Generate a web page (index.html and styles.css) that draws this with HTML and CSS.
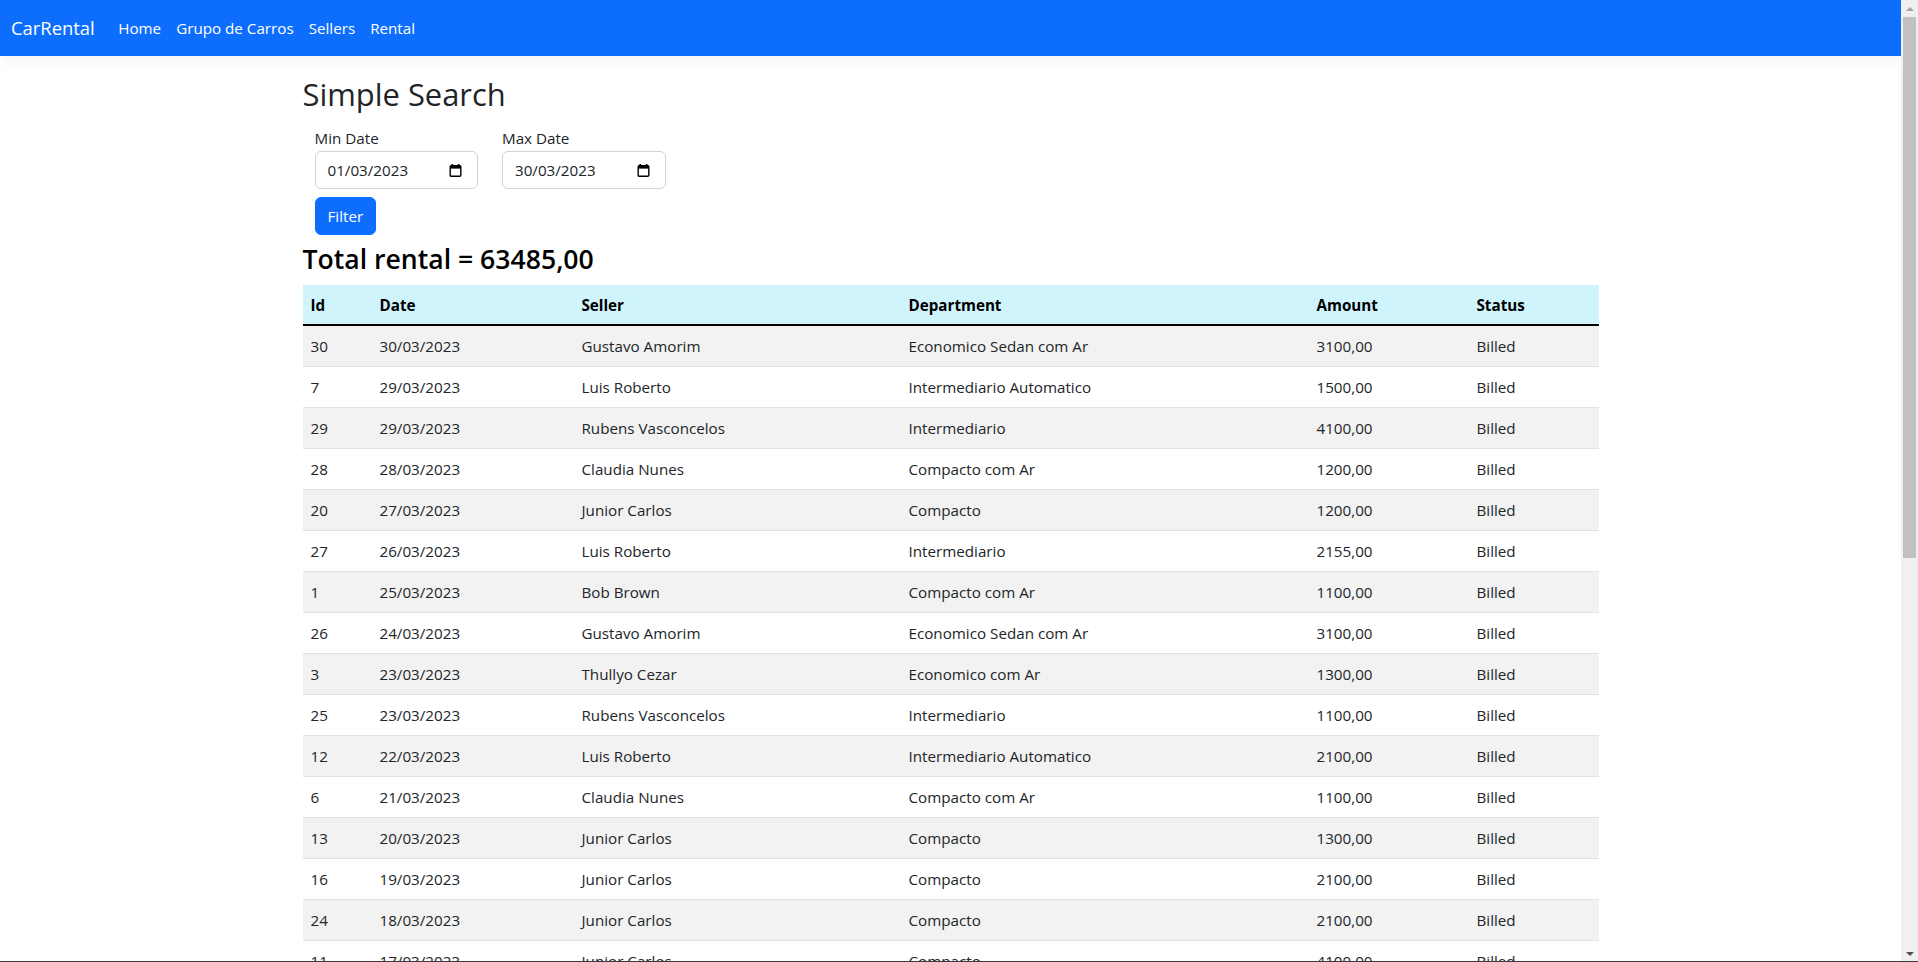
FILE: index.html
```html
<!DOCTYPE html>
<html lang="pt-BR">
<head>
<meta charset="utf-8">
<title>Simple Search - CarRental</title>
<link rel="stylesheet" href="styles.css">
</head>
<body>
<header class="navbar">
  <div class="nav-inner">
    <a class="brand" href="#">CarRental</a>
    <ul class="nav-links">
      <li><a href="#">Home</a></li>
      <li><a href="#">Grupo de Carros</a></li>
      <li><a href="#">Sellers</a></li>
      <li><a href="#">Rental</a></li>
    </ul>
  </div>
</header>
<main class="container">
  <h2 class="page-title">Simple Search</h2>
  <form class="search-form">
    <div class="fields">
      <div class="field">
        <label class="field-label">Min Date</label>
        <div class="date-input">
          <span class="date-value">01/03/2023</span>
          <svg class="cal-icon" width="13" height="13" viewBox="0 0 13 13"><rect x="2.5" y="0" width="1.6" height="2.4" fill="#000"/><rect x="8.9" y="0" width="1.6" height="2.4" fill="#000"/><rect x="1.2" y="1.8" width="10.6" height="10.4" rx="1" fill="none" stroke="#000" stroke-width="1.4"/><rect x="1.2" y="1.8" width="10.6" height="2.8" fill="#000"/></svg>
        </div>
      </div>
      <div class="field">
        <label class="field-label">Max Date</label>
        <div class="date-input">
          <span class="date-value">30/03/2023</span>
          <svg class="cal-icon" width="13" height="13" viewBox="0 0 13 13"><rect x="2.5" y="0" width="1.6" height="2.4" fill="#000"/><rect x="8.9" y="0" width="1.6" height="2.4" fill="#000"/><rect x="1.2" y="1.8" width="10.6" height="10.4" rx="1" fill="none" stroke="#000" stroke-width="1.4"/><rect x="1.2" y="1.8" width="10.6" height="2.8" fill="#000"/></svg>
        </div>
      </div>
    </div>
    <button type="button" class="btn-filter">Filter</button>
  </form>
  <h3 class="total">Total rental = 63485,00</h3>
  <table class="rental-table">
    <thead>
      <tr>
        <th class="col-id">Id</th>
        <th class="col-date">Date</th>
        <th class="col-seller">Seller</th>
        <th class="col-dept">Department</th>
        <th class="col-amount">Amount</th>
        <th class="col-status">Status</th>
      </tr>
    </thead>
    <tbody>
      <tr><td>30</td><td>30/03/2023</td><td>Gustavo Amorim</td><td>Economico Sedan com Ar</td><td>3100,00</td><td>Billed</td></tr>
      <tr><td>7</td><td>29/03/2023</td><td>Luis Roberto</td><td>Intermediario Automatico</td><td>1500,00</td><td>Billed</td></tr>
      <tr><td>29</td><td>29/03/2023</td><td>Rubens Vasconcelos</td><td>Intermediario</td><td>4100,00</td><td>Billed</td></tr>
      <tr><td>28</td><td>28/03/2023</td><td>Claudia Nunes</td><td>Compacto com Ar</td><td>1200,00</td><td>Billed</td></tr>
      <tr><td>20</td><td>27/03/2023</td><td>Junior Carlos</td><td>Compacto</td><td>1200,00</td><td>Billed</td></tr>
      <tr><td>27</td><td>26/03/2023</td><td>Luis Roberto</td><td>Intermediario</td><td>2155,00</td><td>Billed</td></tr>
      <tr><td>1</td><td>25/03/2023</td><td>Bob Brown</td><td>Compacto com Ar</td><td>1100,00</td><td>Billed</td></tr>
      <tr><td>26</td><td>24/03/2023</td><td>Gustavo Amorim</td><td>Economico Sedan com Ar</td><td>3100,00</td><td>Billed</td></tr>
      <tr><td>3</td><td>23/03/2023</td><td>Thullyo Cezar</td><td>Economico com Ar</td><td>1300,00</td><td>Billed</td></tr>
      <tr><td>25</td><td>23/03/2023</td><td>Rubens Vasconcelos</td><td>Intermediario</td><td>1100,00</td><td>Billed</td></tr>
      <tr><td>12</td><td>22/03/2023</td><td>Luis Roberto</td><td>Intermediario Automatico</td><td>2100,00</td><td>Billed</td></tr>
      <tr><td>6</td><td>21/03/2023</td><td>Claudia Nunes</td><td>Compacto com Ar</td><td>1100,00</td><td>Billed</td></tr>
      <tr><td>13</td><td>20/03/2023</td><td>Junior Carlos</td><td>Compacto</td><td>1300,00</td><td>Billed</td></tr>
      <tr><td>16</td><td>19/03/2023</td><td>Junior Carlos</td><td>Compacto</td><td>2100,00</td><td>Billed</td></tr>
      <tr><td>24</td><td>18/03/2023</td><td>Junior Carlos</td><td>Compacto</td><td>2100,00</td><td>Billed</td></tr>
      <tr><td>11</td><td>17/03/2023</td><td>Junior Carlos</td><td>Compacto</td><td>4100,00</td><td>Billed</td></tr>
      <tr><td>23</td><td>16/03/2023</td><td>Bob Brown</td><td>Intermediario</td><td>2100,00</td><td>Billed</td></tr>
      <tr><td>22</td><td>15/03/2023</td><td>Thullyo Cezar</td><td>Compacto</td><td>1500,00</td><td>Billed</td></tr>
      <tr><td>21</td><td>14/03/2023</td><td>Gustavo Amorim</td><td>Economico Sedan com Ar</td><td>3100,00</td><td>Billed</td></tr>
      <tr><td>19</td><td>13/03/2023</td><td>Rubens Vasconcelos</td><td>Intermediario</td><td>4100,00</td><td>Billed</td></tr>
      <tr><td>18</td><td>12/03/2023</td><td>Claudia Nunes</td><td>Compacto com Ar</td><td>1200,00</td><td>Billed</td></tr>
      <tr><td>17</td><td>11/03/2023</td><td>Luis Roberto</td><td>Intermediario</td><td>2155,00</td><td>Billed</td></tr>
      <tr><td>15</td><td>10/03/2023</td><td>Junior Carlos</td><td>Compacto</td><td>1300,00</td><td>Billed</td></tr>
      <tr><td>14</td><td>09/03/2023</td><td>Luis Roberto</td><td>Intermediario Automatico</td><td>2100,00</td><td>Billed</td></tr>
      <tr><td>10</td><td>08/03/2023</td><td>Bob Brown</td><td>Compacto com Ar</td><td>1100,00</td><td>Billed</td></tr>
      <tr><td>9</td><td>07/03/2023</td><td>Gustavo Amorim</td><td>Economico Sedan com Ar</td><td>3100,00</td><td>Billed</td></tr>
      <tr><td>8</td><td>06/03/2023</td><td>Thullyo Cezar</td><td>Economico com Ar</td><td>1100,00</td><td>Billed</td></tr>
      <tr><td>5</td><td>04/03/2023</td><td>Claudia Nunes</td><td>Compacto com Ar</td><td>1075,00</td><td>Billed</td></tr>
      <tr><td>4</td><td>03/03/2023</td><td>Junior Carlos</td><td>Compacto</td><td>1200,00</td><td>Billed</td></tr>
      <tr><td>2</td><td>02/03/2023</td><td>Rubens Vasconcelos</td><td>Intermediario</td><td>2500,00</td><td>Billed</td></tr>
      <tr><td>31</td><td>01/03/2023</td><td>Luis Roberto</td><td>Intermediario</td><td>1500,00</td><td>Billed</td></tr>
    </tbody>
  </table>
</main>
<div class="scrollbar" aria-hidden="true">
  <div class="sb-btn"><span class="sb-arrow-up"></span></div>
  <div class="sb-track"><div class="sb-thumb"></div></div>
  <div class="sb-btn"><span class="sb-arrow-down"></span></div>
</div>
<div class="window-edge"></div>
</body>
</html>
```
FILE: styles.css
```css
body {
  margin: 0 17px 0 0;
  font-family: "Open Sans", "Noto Sans", sans-serif;
  font-size: 15.2px;
  line-height: 24px;
  color: #212529;
  background: #fff;
}

/* navbar */
.navbar {
  background: #0d6efd;
  padding: 8px 0;
  margin-bottom: 16px;
  box-shadow: 0 4px 12px rgba(0, 0, 0, 0.05);
}
.nav-inner {
  display: flex;
  align-items: center;
  padding: 0 12px 0 11px;
}
.brand {
  color: #fff;
  text-decoration: none;
  font-size: 18.4px;
  line-height: 30px;
  padding: 5px 0;
  margin-right: 16px;
}
.nav-links {
  display: flex;
  list-style: none;
  margin: 0;
  padding: 0;
}
.nav-links a {
  display: block;
  color: #fff;
  text-decoration: none;
  padding: 8px 7.5px;
  line-height: 24px;
}

/* main */
.container {
  box-sizing: border-box;
  max-width: 1320px;
  margin: 0 auto;
  padding: 0 12px 36px;
}
.page-title {
  font-size: 30.9px;
  font-weight: 500;
  line-height: 38.4px;
  margin: 0 0 5px;
  padding-top: 3px;
}
.search-form {
  margin: 0;
  padding: 8px 12px 8px;
}
.fields {
  display: flex;
  gap: 24px;
}
.field-label {
  display: block;
  line-height: 24px;
  margin-bottom: 1px;
}
.date-input {
  box-sizing: border-box;
  width: 163.5px;
  height: 38px;
  border: 1px solid #ced4da;
  border-radius: 6px;
  display: flex;
  align-items: center;
  justify-content: space-between;
  padding: 0 15px 0 12px;
  background: #fff;
}
.date-value {
  color: #212529;
}
.cal-icon {
  display: block;
}
.btn-filter {
  display: block;
  margin-top: 8px;
  height: 38px;
  box-sizing: border-box;
  padding: 6px 12px;
  border: 1px solid #0d6efd;
  border-radius: 6px;
  background: #0d6efd;
  color: #fff;
  font-family: inherit;
  font-size: 15.2px;
  line-height: 24px;
}
.total {
  font-size: 26.6px;
  font-weight: 600;
  line-height: 33.6px;
  margin: 0 0 8px;
  color: #000;
}

/* table */
.rental-table {
  width: 100%;
  border-collapse: collapse;
  table-layout: fixed;
  margin-bottom: 16px;
  color: #212529;
}
.rental-table th,
.rental-table td {
  padding: 8px;
  text-align: left;
  line-height: 24px;
  border-bottom: 1px solid #dee2e6;
  white-space: nowrap;
}
.rental-table thead th {
  background: #cff4fc;
  color: #000;
  font-weight: 700;
  padding-bottom: 7px;
  border-bottom: 2px solid #000;
}
.rental-table tbody tr:nth-child(odd) td {
  background: #f2f2f2;
}
.col-id { width: 53px; }
.col-date { width: 186px; }
.col-seller { width: 311px; }
.col-dept { width: 392px; }
.col-amount { width: 144px; }
.col-status { width: auto; }

/* browser scrollbar, drawn over the right edge */
.scrollbar {
  position: fixed;
  top: 0;
  right: 0;
  width: 17px;
  height: 100vh;
  background: #f0f0f0;
  display: flex;
  flex-direction: column;
}
.sb-btn {
  height: 17px;
  flex: none;
  display: flex;
  align-items: center;
  justify-content: center;
}
.sb-arrow-up {
  width: 0;
  height: 0;
  border-left: 4px solid transparent;
  border-right: 4px solid transparent;
  border-bottom: 4px solid #a3a3a3;
}
.sb-arrow-down {
  width: 0;
  height: 0;
  border-left: 4px solid transparent;
  border-right: 4px solid transparent;
  border-top: 4px solid #505050;
}
.sb-track {
  flex: 1;
  padding: 0 2px;
}
.sb-thumb {
  height: 541px;
  background: #c1c1c1;
}

.window-edge {
  position: fixed;
  left: 0;
  right: 0;
  bottom: 0;
  height: 1px;
  background: #3c3a3c;
}
```
